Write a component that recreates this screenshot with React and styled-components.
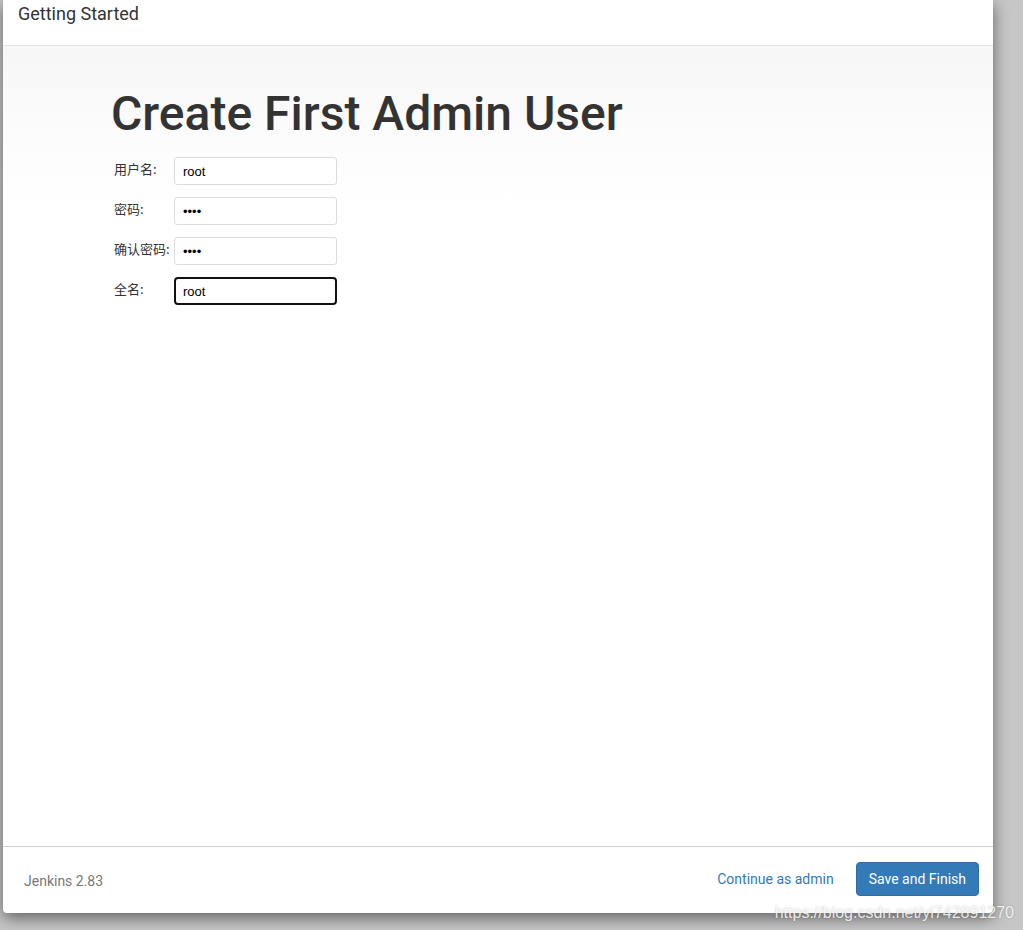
import React from 'react'
import styled, { createGlobalStyle } from 'styled-components'

const GlobalStyle = createGlobalStyle`
    html, body {
        margin: 0;
        padding: 0;
        background: #c6c6c6;
        overflow: hidden;
    }
    * { box-sizing: border-box; }
`;

const Page = styled.div`
    position: relative;
    width: 1023px;
    height: 930px;
    background: #c6c6c6;
`;

const Panel = styled.div`
    margin-left: 3px;
    width: 990px;
    height: 913px;
    background: #fff;
    border-radius: 0 0 4px 4px;
    box-shadow: 0 5px 15px rgba(0, 0, 0, 0.5);
    display: flex;
    flex-direction: column;
    font-family: Roboto, 'Noto Sans', sans-serif;
    color: #333;
`;

const Header = styled.div`
    height: 46px;
    flex-shrink: 0;
    padding: 2px 0 0 15px;
    border-bottom: 1px solid #e5e5e5;
    font-size: 18px;
    line-height: 24px;
`;

const Body = styled.div`
    flex: 1;
    padding: 0 0 0 108px;
    background: linear-gradient(to bottom, #f7f7f7 0, #ffffff 160px);
`;

const Title = styled.h1`
    margin: 37px 0 12px;
    font-size: 48px;
    font-weight: 500;
    line-height: 62px;
    color: #333;
`;

const Form = styled.div`
    display: grid;
    grid-template-columns: 60px 163px;
    grid-auto-rows: 28px;
    row-gap: 12px;
    padding-left: 3px;
`;

const Label = styled.label`
    font-family: 'Noto Sans CJK SC', sans-serif;
    font-size: 13px;
    line-height: 24px;
    color: #333;
`;

const Input = styled.input`
    width: 163px;
    height: 28px;
    margin: 0;
    border: ${p => (p.focused ? '2px solid #111' : '1px solid #dcdcdc')};
    border-radius: ${p => (p.focused ? '4px' : '3px')};
    padding: 0 0 0 ${p => (p.focused ? '7px' : '8px')};
    background: #fff;
    font-family: 'Liberation Sans', Arial, sans-serif;
    font-size: 13px;
    color: #000;
    outline: none;
`;

const Footer = styled.div`
    height: 67px;
    flex-shrink: 0;
    border-top: 1px solid #cfcfcf;
    padding: 0 14px 0 21px;
    display: flex;
    align-items: center;
    justify-content: space-between;
    font-size: 14px;
`;

const Version = styled.span`
    color: #777;
    margin-top: 2px;
`;

const Actions = styled.div`
    display: flex;
    align-items: center;
    gap: 22px;
`;

const LinkButton = styled.span`
    color: #337ab7;
    margin-top: -3px;
`;

const Primary = styled.button`
    height: 34px;
    padding: 0 12px;
    border: 1px solid #2e6da4;
    border-radius: 4px;
    background: #337ab7;
    color: #fff;
    font-family: Roboto, sans-serif;
    font-size: 14px;
    margin-top: -3px;
`;

const Watermark = styled.div`
    position: absolute;
    right: 9px;
    bottom: 8px;
    font-family: 'Liberation Sans', Arial, sans-serif;
    font-size: 16px;
    color: rgba(255, 255, 255, 0.85);
    text-shadow: 0 0 2px rgba(0, 0, 0, 0.25);
    pointer-events: none;
`;

const fields = [
    { label: '用户名:', value: 'root', type: 'text' },
    { label: '密码:', value: 'root', type: 'password' },
    { label: '确认密码:', value: 'root', type: 'password' },
    { label: '全名:', value: 'root', type: 'text', focused: true },
];

function App() {
    return (
        <Page>
            <GlobalStyle />
            <Panel>
                <Header>Getting Started</Header>
                <Body>
                    <Title>Create First Admin User</Title>
                    <Form>
                        {fields.map(f => (
                            <React.Fragment key={f.label}>
                                <Label>{f.label}</Label>
                                <Input type={f.type} defaultValue={f.value} focused={f.focused ? 1 : 0} readOnly />
                            </React.Fragment>
                        ))}
                    </Form>
                </Body>
                <Footer>
                    <Version>Jenkins 2.83</Version>
                    <Actions>
                        <LinkButton>Continue as admin</LinkButton>
                        <Primary>Save and Finish</Primary>
                    </Actions>
                </Footer>
            </Panel>
            <Watermark>https://blog.csdn.net/yi742891270</Watermark>
        </Page>
    )
}

export default App;
